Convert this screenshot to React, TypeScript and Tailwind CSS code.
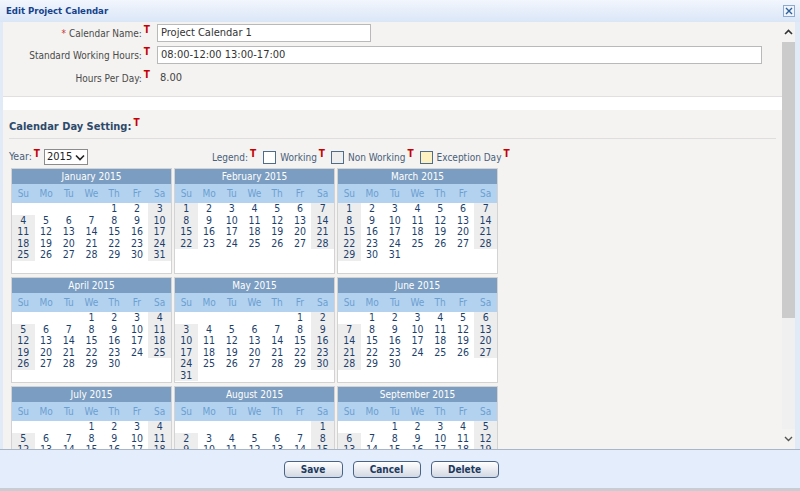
import React from 'react';

const MONTHS = [
  'January', 'February', 'March', 'April', 'May', 'June',
  'July', 'August', 'September', 'October', 'November', 'December',
];
const DAYS = ['Su', 'Mo', 'Tu', 'We', 'Th', 'Fr', 'Sa'];
const YEAR = 2015;

// red "T" translation marker
const T = () => (
  <span className="relative -top-[4px] ml-[2px] text-[10px] font-bold text-[#c40000]">T</span>
);

const Month = ({ m }: { m: number }) => {
  const first = new Date(YEAR, m, 1).getDay();
  const count = new Date(YEAR, m + 1, 0).getDate();
  const cells: (number | null)[] = [];
  for (let i = 0; i < 42; i++) {
    const d = i - first + 1;
    cells.push(d >= 1 && d <= count ? d : null);
  }
  return (
    <div className="w-[161px] h-[106px] border border-[#d3d3d3] bg-white flex flex-col">
      <div className="h-[15px] bg-[#7b9dc1] text-white text-[10px] leading-[15px] text-center">
        {MONTHS[m]} {YEAR}
      </div>
      <div className="h-[19px] bg-[#b3d2ef] grid grid-cols-7 text-[10px] leading-[19px] text-center text-[#6c9fd1]">
        {DAYS.map((d) => <div key={d}>{d}</div>)}
      </div>
      <div className="grid grid-cols-7 text-[10.5px] text-center text-[#1d3f6c]">
        {cells.map((d, i) => {
          const weekend = i % 7 === 0 || i % 7 === 6;
          return (
            <div
              key={i}
              className={`h-[11.5px] leading-[11.5px] ${d && weekend ? 'bg-[#ededed]' : ''}`}
            >
              {d ?? ''}
            </div>
          );
        })}
      </div>
    </div>
  );
};

const Btn = ({ label, w }: { label: string; w: string }) => (
  <button
    type="button"
    className={`${w} h-[17px] rounded-[4px] border border-[#4a6487] bg-gradient-to-b from-white to-[#d3d8e2] text-[10px] font-bold text-[#1c3a60] leading-[15px]`}
  >
    {label}
  </button>
);

export default function App() {
  return (
    <div className="w-[800px] h-[491px] flex flex-col bg-[#e1eaf7] font-['DejaVu_Sans_Condensed','DejaVu_Sans',sans-serif] font-stretch-condensed text-[10px] text-[#3c3c3c] overflow-hidden">
      {/* title bar */}
      <div className="h-[22px] shrink-0 flex items-center justify-between pl-[6px] pr-[5px] bg-gradient-to-b from-[#f2f6fd] to-[#dae6f7]">
        <span className="text-[9.5px] font-bold text-[#15428b]">Edit Project Calendar</span>
        <span className="w-[12px] h-[12px] border border-[#8eaad0] bg-[#eef4fc] flex items-center justify-center">
          <svg width="8" height="8" viewBox="0 0 8 8">
            <path d="M1 1L7 7M7 1L1 7" stroke="#2f5f9a" strokeWidth="1.4" />
          </svg>
        </span>
      </div>

      {/* body */}
      <div className="h-[427px] shrink-0 flex">
        <div className="w-[3px] bg-[#e1eaf7]" />
        <div className="w-[779px] overflow-hidden bg-[#f4f3f1]">
          {/* general section */}
          <div className="h-[75px] pt-[2px] border-b border-[#e3dfdf] text-[#4a4a4a]">
            <div className="grid grid-cols-[147px_1fr] gap-x-[7px] gap-y-[4px] items-center">
              <div className="text-right">
                <span className="text-[#c83a3a] mr-[3px]">*</span>Calendar Name:<T />
              </div>
              <div className="w-[214px] h-[18px] border border-[#b9b9b9] bg-white px-[3px] text-[11px] leading-[16px] text-[#333]">
                Project Calendar 1
              </div>
              <div className="text-right">Standard Working Hours:<T /></div>
              <div className="w-[605px] h-[18px] border border-[#b9b9b9] bg-white px-[3px] text-[11px] leading-[16px] text-[#333]">
                08:00-12:00 13:00-17:00
              </div>
              <div className="text-right pt-[2px]">Hours Per Day:<T /></div>
              <div className="pl-[3px] pt-[2px] text-[11px] text-[#444]">8.00</div>
            </div>
          </div>
          <div className="h-[13px] bg-white" />

          {/* calendar section */}
          <div className="pt-[9px]">
            <div className="mx-[6px] pb-[3px] border-b border-[#dedede] h-[20px]">
              <span className="text-[11px] font-bold text-[#2d4a6b] leading-[16px]">Calendar Day Setting:</span>
              <T />
            </div>
            <div className="mt-[10px] h-[16px] pl-[6px] flex items-center text-[#48607a] text-[10px]">
              <div className="w-[203px] flex items-center">
                <span className="text-[10.5px]">Year:</span>
                <T />
                <div className="ml-[4px] w-[44px] h-[16px] border border-[#8c8c8c] bg-white flex items-center justify-between px-[2px]">
                  <span className="text-[11px] text-[#222]">2015</span>
                  <svg width="10" height="7" viewBox="0 0 10 7">
                    <path d="M1 1.5L5 5.5L9 1.5" fill="none" stroke="#222" strokeWidth="1.6" />
                  </svg>
                </div>
              </div>
              <span>Legend:</span>
              <T />
              <span className="ml-[7px] w-[13px] h-[13px] border border-[#4d6d8b] bg-white" />
              <span className="ml-[4px]">Working</span>
              <T />
              <span className="ml-[6px] w-[13px] h-[13px] border border-[#4d6d8b] bg-[#eeeeee]" />
              <span className="ml-[4px]">Non Working</span>
              <T />
              <span className="ml-[6px] w-[13px] h-[13px] border border-[#4d6d8b] bg-[#fdf1c1]" />
              <span className="ml-[4px]">Exception Day</span>
              <T />
            </div>
            <div className="mt-[3px] ml-[8px] grid grid-cols-[161px_161px_161px] gap-x-[2px] gap-y-[3px] w-max">
              {MONTHS.map((_, m) => <Month key={m} m={m} />)}
            </div>
          </div>
        </div>

        {/* scrollbar */}
        <div className="w-[13px] flex flex-col bg-[#f0f0f0]">
          <div className="h-[20px] bg-[#f4f3f1] flex items-center justify-center">
            <svg width="9" height="6" viewBox="0 0 9 6">
              <path d="M1 5L4.5 1.5L8 5" fill="none" stroke="#333" strokeWidth="1.6" />
            </svg>
          </div>
          <div className="h-[276px] bg-[#cbcbcb]" />
          <div className="flex-1" />
          <div className="h-[20px] bg-[#f4f3f1] flex items-center justify-center">
            <svg width="9" height="6" viewBox="0 0 9 6">
              <path d="M1 1L4.5 4.5L8 1" fill="none" stroke="#555" strokeWidth="1.4" />
            </svg>
          </div>
        </div>
        <div className="flex-1 bg-[#e1eaf7]" />
      </div>

      {/* footer */}
      <div className="h-[39px] shrink-0 border-t border-[#a9b6c8] bg-[#e4edfb] flex items-center justify-center gap-[10px] pr-[18px] pt-[1px]">
        <Btn label="Save" w="w-[59px]" />
        <Btn label="Cancel" w="w-[68px]" />
        <Btn label="Delete" w="w-[68px]" />
      </div>
      <div className="flex-1 bg-[#c9cdd3]" />
    </div>
  );
}
